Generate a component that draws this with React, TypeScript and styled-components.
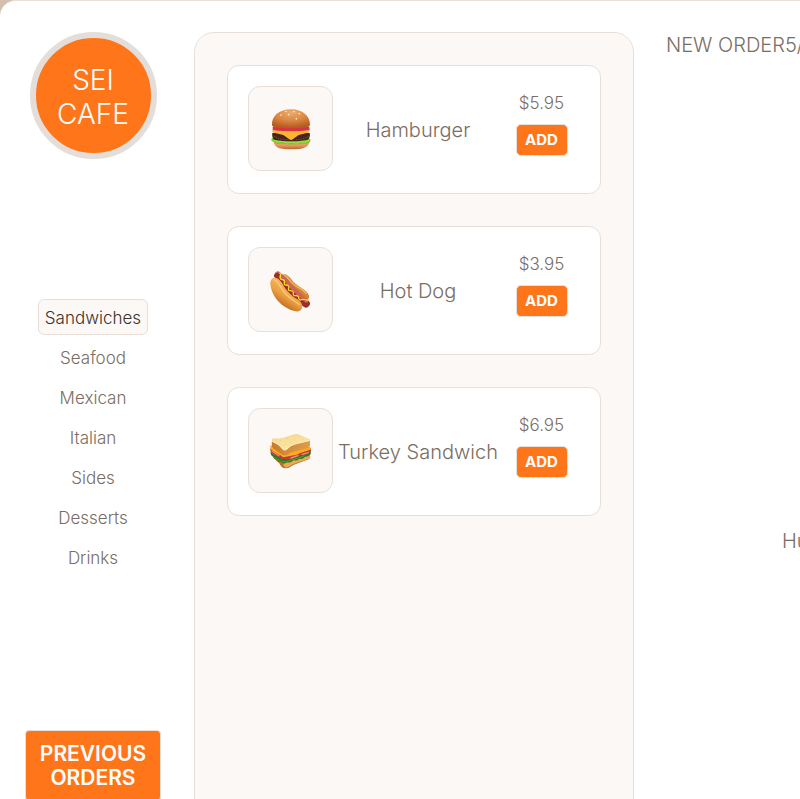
import React, { useState } from 'react';
import styled, { createGlobalStyle } from 'styled-components';

const color = {
  orange: '#ff761a',
  panel: '#fcf8f5',
  line: '#e8dfd8',
  ring: '#e3deda',
  backdrop: '#d3bfae',
  text: '#7a6d63',
  dark: '#3a322d',
};

const GlobalStyle = createGlobalStyle`
  *, *::before, *::after { box-sizing: border-box; }
  html { overflow: hidden; background: ${color.backdrop}; }
  body {
    margin: 0;
    color: ${color.text};
    font-family: Inter, "Liberation Sans", sans-serif;
    font-weight: 300;
  }
  button { font-family: inherit; cursor: pointer; }
`;

const Page = styled.main`
  display: grid;
  grid-template-columns: minmax(186px, 186fr) minmax(448px, 448fr) minmax(448px, 448fr);
  width: max-content;
  min-width: 100%;
  min-height: 120vh;
  border-top: 1px solid ${color.line};
  border-radius: 16px 16px 0 0;
  background: white;
  overflow: hidden;
`;

const Sidebar = styled.aside`
  display: flex;
  flex-direction: column;
  align-items: center;
  padding: 31px 0;
`;

const Logo = styled.div`
  display: flex;
  align-items: center;
  justify-content: center;
  width: 127px;
  height: 127px;
  padding-top: 2px;
  border: 6px solid ${color.ring};
  border-radius: 50%;
  background: ${color.orange};
  color: white;
  font-size: 28px;
  line-height: 34px;
  text-align: center;
`;

const Categories = styled.nav`
  display: flex;
  flex-direction: column;
  align-items: center;
  gap: 4px;
  margin: 140px 0 155px;
`;

const Category = styled.button<{ $active: boolean }>`
  height: 36px;
  padding: 2px 6px 0;
  border: 1px solid ${(p) => (p.$active ? color.line : 'transparent')};
  border-radius: 6px;
  background: ${(p) => (p.$active ? color.panel : 'transparent')};
  color: ${(p) => (p.$active ? color.dark : color.text)};
  font-size: 17px;
  font-weight: 300;
`;

const PreviousOrders = styled.button`
  width: 136px;
  padding: 11px 8px 10px;
  border: 1px solid ${color.line};
  border-radius: 4px;
  background: ${color.orange};
  color: white;
  font-size: 21px;
  font-weight: 600;
  line-height: 24px;
`;

const Menu = styled.ul`
  display: flex;
  flex-direction: column;
  gap: 32px;
  margin: 31px 0 0 8px;
  padding: 32px;
  border: 1px solid ${color.line};
  border-radius: 20px;
  background: ${color.panel};
  list-style: none;
`;

const Card = styled.li`
  display: grid;
  grid-template-columns: 85px 1fr 77px;
  align-items: center;
  padding: 20px 20px 22px;
  border: 1px solid ${color.line};
  border-radius: 12px;
  background: white;
  text-align: center;
`;

const Thumb = styled.div`
  display: flex;
  align-items: center;
  justify-content: center;
  height: 85px;
  border: 1px solid ${color.line};
  border-radius: 12px;
  background: ${color.panel};

  svg { width: 44px; height: 44px; }
`;

const Name = styled.span`
  padding-top: 2px;
  font-size: 20px;
  white-space: nowrap;
`;

const Purchase = styled.div`
  display: flex;
  flex-direction: column;
  align-items: center;
  gap: 10px;
  padding-bottom: 10px;
`;

const Price = styled.span`
  font-size: 17px;
  line-height: 22px;
`;

const AddButton = styled.button`
  width: 52px;
  height: 32px;
  padding: 0;
  border: 1px solid ${color.line};
  border-radius: 5px;
  background: ${color.orange};
  color: white;
  font-size: 15px;
  font-weight: 700;
`;

const Order = styled.section`
  display: flex;
  flex-direction: column;
  padding: 31px 32px;
  font-size: 20px;
  white-space: nowrap;
`;

const OrderHeading = styled.header`
  display: flex;
  line-height: 26px;
`;

const OrderPrompt = styled.p`
  margin: 470px 0 0 116px;
  line-height: 26px;
`;

const Burger = () => (
  <svg viewBox="87 80 132 132" aria-hidden="true">
    <defs>
      <radialGradient id="bunTop" cx="0.5" cy="0.15" r="0.8">
        <stop offset="0" stopColor="#ecac6c" />
        <stop offset="0.55" stopColor="#dc8743" />
        <stop offset="1" stopColor="#b75b22" />
      </radialGradient>
      <linearGradient id="bunBase" x1="0" y1="0" x2="0" y2="1">
        <stop offset="0" stopColor="#d98346" />
        <stop offset="0.5" stopColor="#e9a067" />
        <stop offset="1" stopColor="#bd6429" />
      </linearGradient>
    </defs>
    <path d="M101 181 Q153 194 208 181 C208 199 195 207 153 207 C113 207 101 198 101 181Z" fill="url(#bunBase)" />
    <path d="M96 174 Q91 181 99 184 Q107 184 111 189 Q117 193 123 188 Q132 193 139 190 Q148 195 156 190 Q165 195 172 190 Q181 195 187 188 Q195 193 201 187 Q213 189 211 177 L203 170 H101Z" fill="#79c82f" />
    <path d="M101 180 Q114 188 127 183 Q143 191 154 185 Q171 192 183 184 Q194 188 207 180" fill="none" stroke="#a8e453" strokeWidth="3" />
    <path d="M97 158 Q153 151 209 158 Q212 169 204 178 Q153 187 102 178 Q95 171 97 158Z" fill="#48251b" />
    <path d="M101 168 Q121 179 145 178 M168 178 Q192 177 206 167" fill="none" stroke="#70402c" strokeWidth="4" strokeDasharray="4 3" />
    <path d="M96 151 Q151 144 209 151 Q210 155 202 157 L176 164 L158 177 Q153 181 147 176 L130 164 L102 157 Q96 155 96 151Z" fill="#ffb42f" />
    <path d="M98 140 Q153 137 208 140 L209 150 Q153 156 98 150Z" fill="#d8343f" />
    <path d="M96 135 C94 106 119 87 153 87 C187 87 211 107 210 134 Q209 140 201 141 Q153 147 105 141 Q98 141 96 135Z" fill="url(#bunTop)" />
    <g fill="#fff0cd">
      <ellipse cx="123" cy="104" rx="3" ry="2" transform="rotate(-35 123 104)" />
      <ellipse cx="138" cy="93" rx="3" ry="2" />
      <ellipse cx="146" cy="103" rx="3" ry="2" transform="rotate(30 146 103)" />
      <ellipse cx="162" cy="94" rx="3" ry="2" />
      <ellipse cx="169" cy="115" rx="2" ry="3" />
      <ellipse cx="178" cy="100" rx="3" ry="2" transform="rotate(40 178 100)" />
    </g>
  </svg>
);

const HotDog = () => (
  <svg viewBox="87 82 132 132" aria-hidden="true">
    <defs>
      <linearGradient id="bunFront" x1="0.7" y1="0.2" x2="0.3" y2="0.85">
        <stop offset="0" stopColor="#f7bd68" />
        <stop offset="0.55" stopColor="#eda042" />
        <stop offset="1" stopColor="#bb651d" />
      </linearGradient>
    </defs>
    <path d="M124 104 C132 96 145 103 154 116 C161 128 172 133 188 144 C202 153 211 164 206 174 L184 188 L136 135Z" fill="#d78435" />
    <path d="M130 105 C140 103 148 118 155 126 C166 138 190 144 200 160" fill="none" stroke="#f3b866" strokeWidth="4" />
    <path d="M114 105 Q135 125 149 143 Q169 166 198 189" fill="none" stroke="#9a3024" strokeWidth="23" strokeLinecap="round" />
    <path d="M123 108 Q140 120 154 138 Q171 157 199 180" fill="none" stroke="#cd6455" strokeWidth="12" strokeLinecap="round" />
    <path d="M107 96 Q112 91 120 97" fill="none" stroke="#dd7b68" strokeWidth="3" strokeLinecap="round" />
    <path d="M98 113 C105 106 117 114 126 127 C136 146 151 164 171 175 C184 182 190 194 185 205 C178 218 157 212 137 200 C111 185 94 158 91 131 Q89 119 98 113Z" fill="url(#bunFront)" />
    <path d="M101 116 C113 119 119 136 130 151 C143 170 163 178 179 193" fill="none" stroke="#ffd58d" strokeWidth="4" opacity="0.75" />
    <path d="M119 98 Q124 99 121 107 Q119 116 127 117 Q135 118 133 125 Q131 133 139 133 Q148 134 146 142 Q143 151 152 150 Q162 151 160 159 Q159 166 168 165 Q177 166 176 172 Q177 179 185 177 Q194 175 203 179" fill="none" stroke="#ffdb27" strokeWidth="4" strokeLinecap="round" />
  </svg>
);

const Sandwich = () => (
  <svg viewBox="87 85 132 132" aria-hidden="true">
    <defs>
      <linearGradient id="bread" x1="0.2" y1="0" x2="0.6" y2="1">
        <stop offset="0" stopColor="#f2d992" />
        <stop offset="1" stopColor="#ffe6a6" />
      </linearGradient>
      <linearGradient id="crust" x1="0" y1="0" x2="1" y2="0">
        <stop offset="0" stopColor="#c77a2d" />
        <stop offset="0.35" stopColor="#d18a3a" />
        <stop offset="1" stopColor="#dd9c4a" />
      </linearGradient>
    </defs>
    <path d="M98 164 L132 184 L207 158 L211 168 Q211 175 198 179 L160 193 Q146 204 133 203 Q124 201 118 188 Q102 176 98 164Z" fill="#bf7227" />
    <path d="M130 190 Q151 182 173 174 L209 163 Q213 172 203 176 L158 191 Q144 202 136 200 Q130 198 130 190Z" fill="#e9ab55" />
    <path d="M91 154 L100 160 L130 175 L210 150 Q216 158 209 163 Q203 170 195 168 Q187 178 178 174 Q170 183 161 178 Q151 189 142 184 Q132 192 123 184 Q113 185 110 177 Q102 176 99 168 Q91 163 91 154Z" fill="#327926" />
    <path d="M103 170 Q117 179 125 182 Q139 187 153 178 Q178 173 193 165" fill="none" stroke="#6fab34" strokeWidth="2" />
    <path d="M91 143 L130 168 L212 143 Q216 153 207 158 L181 165 L159 173 Q136 182 116 170 L94 157 Q90 151 91 143Z" fill="#c03b35" />
    <path d="M96 151 L117 165 M153 172 L174 165 M187 161 L205 156" stroke="#ee8d79" strokeWidth="4" strokeLinecap="round" />
    <path d="M91 133 L128 155 L207 138 Q216 141 211 147 L181 157 L170 162 L130 170 L121 163 L103 154 L91 144Z" fill="#ffa91e" />
    <path d="M97 116 Q94 127 96 138 Q98 144 108 149 L126 162 Q138 167 150 157 Q160 152 179 149 L203 142 Q210 140 210 132 L210 117Z" fill="url(#crust)" />
    <path d="M95 119 Q96 112 108 113 Q128 115 145 106 L167 100 Q172 99 178 102 L206 114 Q213 119 207 122 Q186 127 166 131 Q151 135 142 146 Q134 154 126 145 Q115 130 101 126 Q95 124 95 119Z" fill="url(#bread)" />
    <path d="M98 122 Q116 128 127 143 Q134 152 141 144 Q150 134 165 130 L208 119" fill="none" stroke="#fff0bd" strokeWidth="2" />
    <path d="M122 119 h2 M142 113 h2 M161 118 h2 M178 109 h2 M151 126 h2 M188 117 h2 M134 131 h2" stroke="#ddbc72" strokeWidth="2" />
  </svg>
);

const categories = ['Sandwiches', 'Seafood', 'Mexican', 'Italian', 'Sides', 'Desserts', 'Drinks'];

const items = [
  { name: 'Hamburger', price: '$5.95', Picture: Burger },
  { name: 'Hot Dog', price: '$3.95', Picture: HotDog },
  { name: 'Turkey Sandwich', price: '$6.95', Picture: Sandwich },
];

export default function App() {
  const [active, setActive] = useState('Sandwiches');
  return (
    <>
      <GlobalStyle />
      <Page>
        <Sidebar>
          <Logo>SEI<br />CAFE</Logo>
          <Categories aria-label="Categories">
            {categories.map((c) => (
              <Category key={c} $active={c === active} aria-pressed={c === active} onClick={() => setActive(c)}>
                {c}
              </Category>
            ))}
          </Categories>
          <PreviousOrders>PREVIOUS ORDERS</PreviousOrders>
        </Sidebar>
        <Menu>
          {items.map(({ name, price, Picture }) => (
            <Card key={name}>
              <Thumb><Picture /></Thumb>
              <Name>{name}</Name>
              <Purchase>
                <Price>{price}</Price>
                <AddButton aria-label={`ADD ${name}`}>ADD</AddButton>
              </Purchase>
            </Card>
          ))}
        </Menu>
        <Order>
          <OrderHeading>
            <span>NEW ORDER</span>
            <span>5/</span>
          </OrderHeading>
          <OrderPrompt>Hungry?</OrderPrompt>
        </Order>
      </Page>
    </>
  );
}
